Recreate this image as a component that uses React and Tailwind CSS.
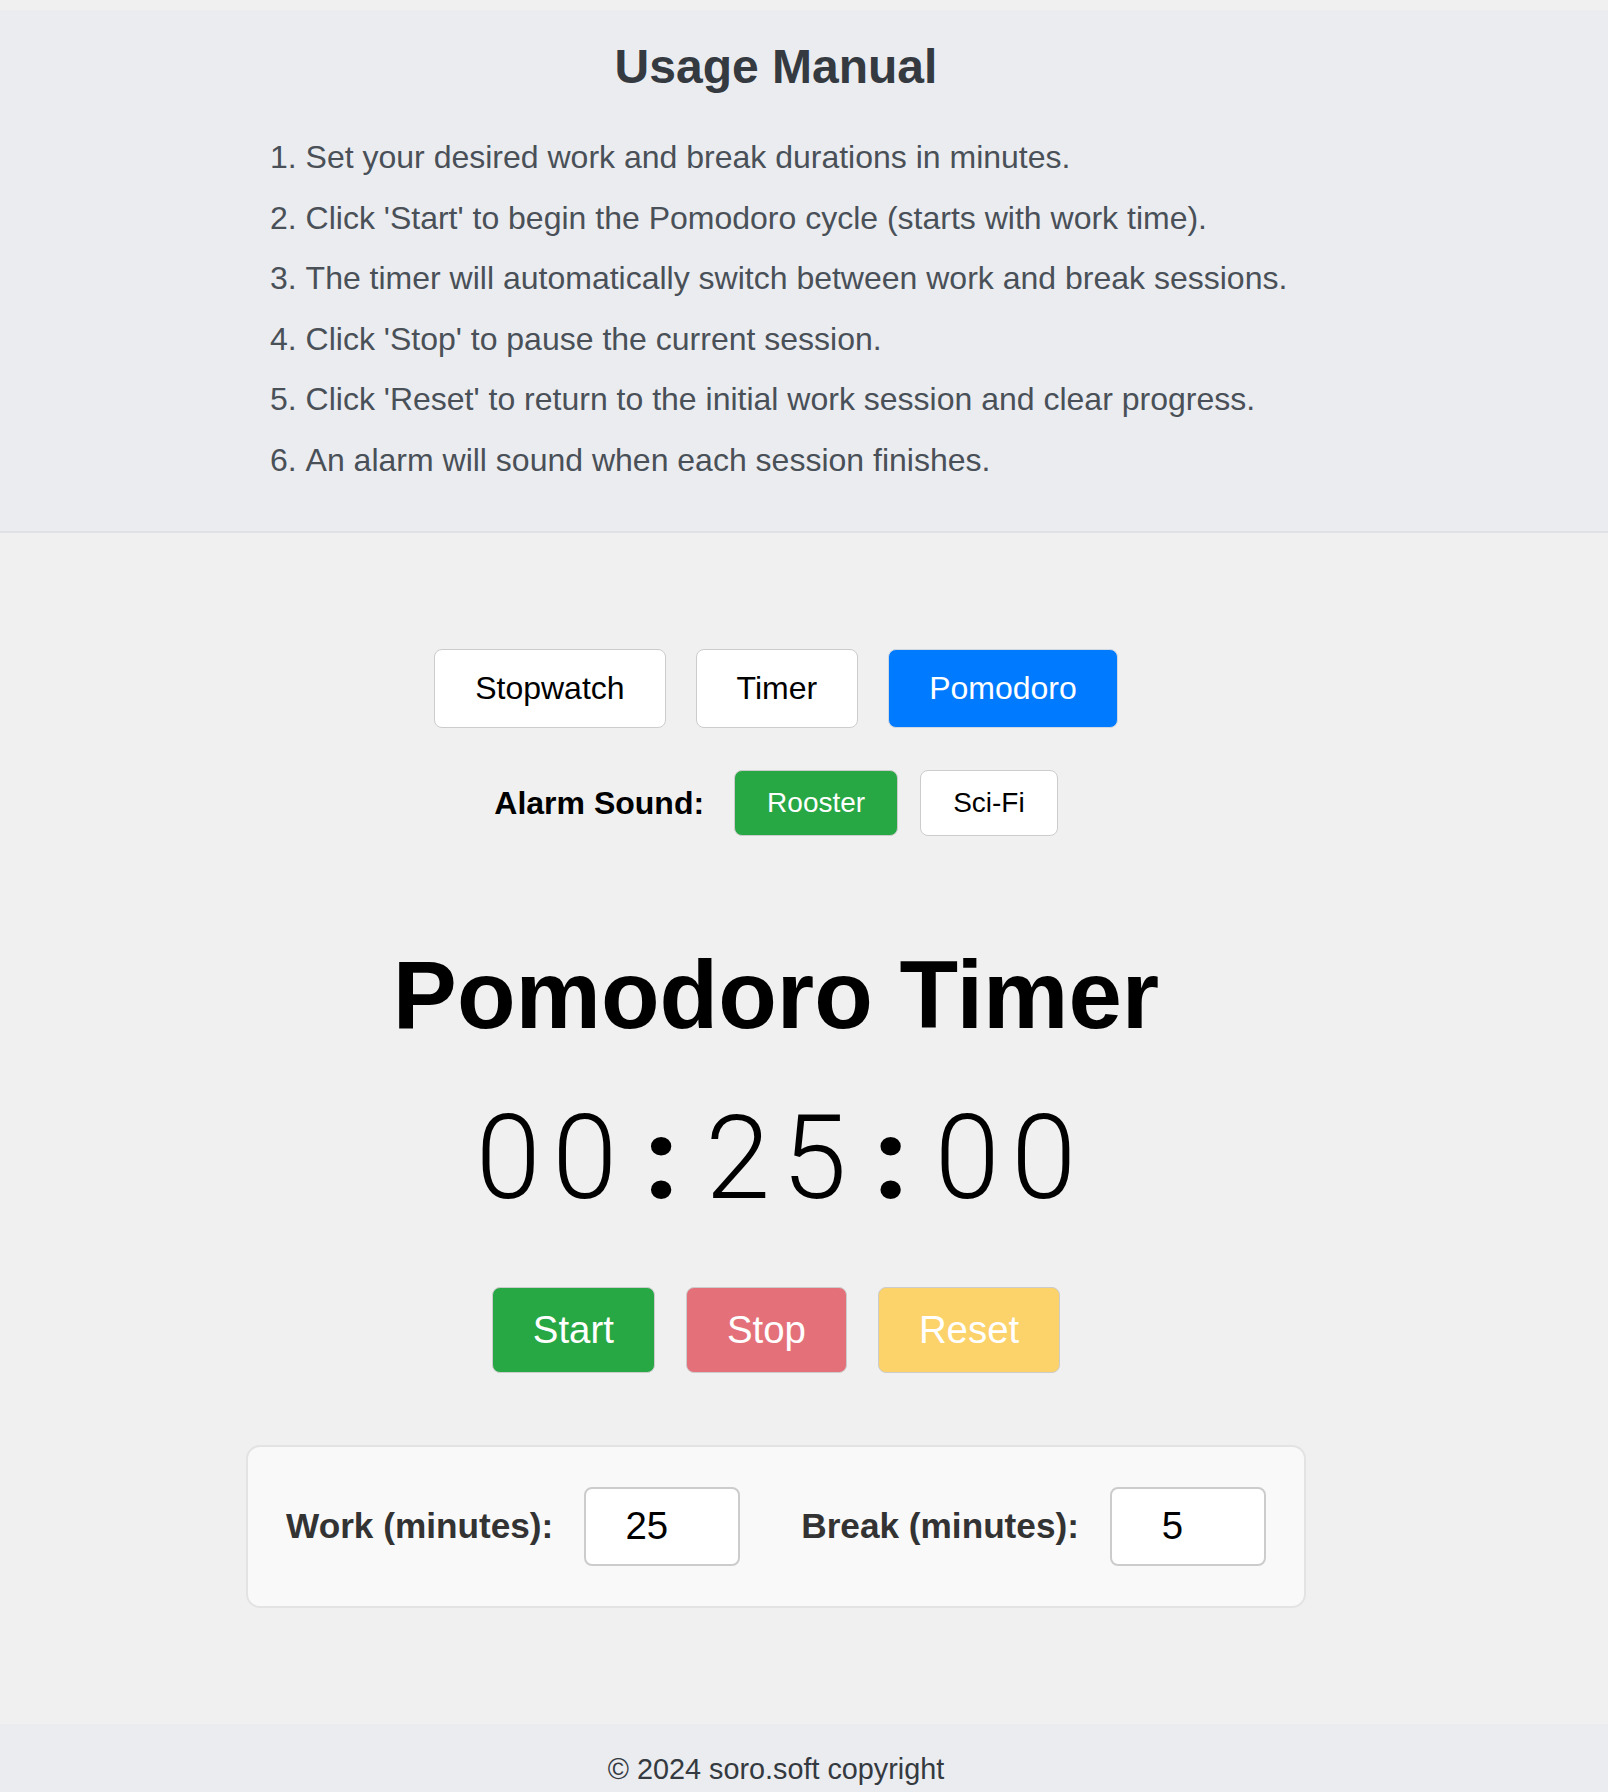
import { useState } from "react";

const steps = [
  "Set your desired work and break durations in minutes.",
  "Click 'Start' to begin the Pomodoro cycle (starts with work time).",
  "The timer will automatically switch between work and break sessions.",
  "Click 'Stop' to pause the current session.",
  "Click 'Reset' to return to the initial work session and clear progress.",
  "An alarm will sound when each session finishes.",
];

function pad(n) {
  return String(n).padStart(2, "0");
}

export default function App() {
  const [mode, setMode] = useState("Pomodoro");
  const [sound, setSound] = useState("Rooster");
  const [work, setWork] = useState(25);
  const [rest, setRest] = useState(5);

  const tabs = ["Stopwatch", "Timer", "Pomodoro"];
  const sounds = ["Rooster", "Sci-Fi"];
  const time = `${pad(0)}:${pad(work)}:${pad(0)}`;

  return (
    <div className="min-h-screen bg-[#f0f0f0] pt-[10px] font-['Liberation_Sans',Arial,sans-serif]">
      <header className="bg-[#ebecf0] border-b-2 border-[#e0e1e6] pt-[29px] pb-[40px] pr-[56px]">
        <h2 className="text-center text-[48px] leading-[55px] font-bold text-[#343a40]">
          Usage Manual
        </h2>
        <ol className="list-decimal list-inside mt-[33px] pl-[270px] text-[32px] leading-[60.6px] text-[#495057]">
          {steps.map((s) => (
            <li key={s}>{s}</li>
          ))}
        </ol>
      </header>

      <main className="flex flex-col items-center pt-[116px] pb-[116px] pr-[56px]">
        <div className="flex gap-[30px]">
          {tabs.map((t) => (
            <button
              key={t}
              onClick={() => setMode(t)}
              className={
                mode === t
                  ? "h-[79px] px-[40px] text-[32px] rounded-[8px] border border-[#cfd8e3] bg-[#007bff] text-white"
                  : "h-[79px] px-[40px] text-[32px] rounded-[8px] border border-[#cccccc] bg-white text-black"
              }
            >
              {t}
            </button>
          ))}
        </div>

        <div className="flex items-center mt-[42px]">
          <span className="text-[32px] font-bold text-black mr-[30px]">Alarm Sound:</span>
          <div className="flex gap-[22px]">
            {sounds.map((s) => (
              <button
                key={s}
                onClick={() => setSound(s)}
                className={
                  sound === s
                    ? "h-[66px] px-[32px] text-[28px] rounded-[8px] border border-[#cccccc] bg-[#28a745] text-white"
                    : "h-[66px] px-[32px] text-[28px] rounded-[8px] border border-[#cccccc] bg-white text-black"
                }
              >
                {s}
              </button>
            ))}
          </div>
        </div>

        <h1 className="mt-[104px] text-[96px] leading-[110px] font-bold text-black">
          {mode} Timer
        </h1>

        {/* digits thin, colons heavy and round like the original */}
        <div className="mt-[40px] flex items-baseline text-black">
          {time.split("").map((c, i) => (
            <span
              key={i}
              className={
                c === ":"
                  ? "w-[76.5px] text-center text-[112px] leading-[137px] font-black font-['Roboto',sans-serif]"
                  : "w-[76.5px] text-center text-[117px] leading-[137px] font-light font-['Roboto',sans-serif]"
              }
            >
              {c}
            </span>
          ))}
        </div>

        <div className="flex gap-[31px] mt-[59px]">
          <button className="h-[86px] px-[40px] text-[38.4px] rounded-[8px] border border-[#cccccc] bg-[#28a745] text-white">
            Start
          </button>
          <button className="h-[86px] px-[40px] text-[38.4px] rounded-[8px] border border-[#cccccc] bg-[#e4717a] text-white">
            Stop
          </button>
          <button className="h-[86px] px-[40px] text-[38.4px] rounded-[8px] border border-[#cccccc] bg-[#fcd26a] text-white">
            Reset
          </button>
        </div>

        <div className="mt-[72px] w-[1060px] flex items-center justify-center bg-[#f9f9f9] border-2 border-[#e3e3e3] rounded-[14px] p-[40px]">
          <label className="shrink-0 whitespace-nowrap text-[35.2px] font-bold text-[#333333] mr-[31px]">
            Work (minutes):
          </label>
          <input
            type="number"
            value={work}
            onChange={(e) => setWork(e.target.value)}
            className="shrink-0 w-[156px] h-[79px] bg-white border-2 border-[#cccccc] rounded-[8px] text-center pr-[16px] text-[38.4px] text-black"
          />
          <label className="shrink-0 whitespace-nowrap text-[35.2px] font-bold text-[#333333] ml-[61px] mr-[31px]">
            Break (minutes):
          </label>
          <input
            type="number"
            value={rest}
            onChange={(e) => setRest(e.target.value)}
            className="shrink-0 w-[156px] h-[79px] bg-white border-2 border-[#cccccc] rounded-[8px] text-center pr-[16px] text-[38.4px] text-black"
          />
        </div>
      </main>

      <footer className="bg-[#ebecf0] pt-[24px] pb-[28px] pr-[56px] text-center text-[28.8px] text-[#343a40]">
        © 2024 soro.soft copyright
      </footer>
    </div>
  );
}
